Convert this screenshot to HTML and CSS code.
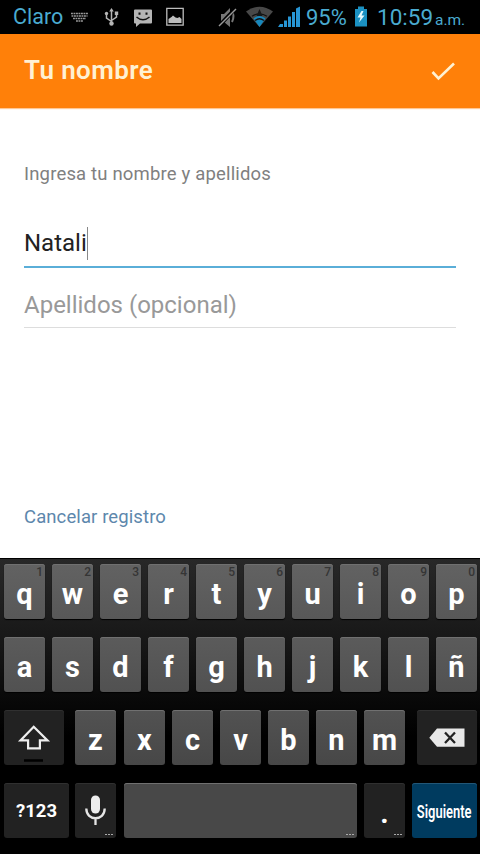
FILE: index.html
```html
<!DOCTYPE html>
<html lang="es">
<head>
<meta charset="utf-8">
<title>Tu nombre</title>
<link rel="stylesheet" href="styles.css">
</head>
<body>
<div class="status">
  <span class="carrier">Claro</span>
  <svg class="icons" width="116" height="33" viewBox="0 0 116 33">
    <path d="M1 13.500h17M1.500 16h16M3 18.500h13M6 21h7" fill="none" stroke="#999" stroke-width="1.700" stroke-dasharray="1.900 .6"/>
    <g fill="none" stroke="#b5b5b5" stroke-width="1.500"><path d="M41.500 10v14M36.500 14v4l5 3.500M46.500 13v4l-5 3.500"/></g>
    <g fill="#b5b5b5"><path d="M41.500 8l2.300 3.500h-4.600zM44.800 11.500h3.400v3.400h-3.400z"/><circle cx="36.500" cy="13.500" r="1.700"/><circle cx="41.500" cy="23.500" r="2.200"/></g>
    <path d="M65 9.500h16q1 0 1 1v12q0 1-1 1H70L66 27v-3.500h-1q-1 0-1-1v-12q0-1 1-1z" fill="#b5b5b5"/>
    <path d="M66.500 17q6.500 5.500 13 0" fill="none" stroke="#111" stroke-width="1.500"/><path d="M68.500 12.500h2v2.200h-2zM75.500 12.500h2v2.200h-2z" fill="#111"/>
    <path d="M96.800 8.300h16.400v16.900H96.800z" fill="none" stroke="#bdbdbd" stroke-width="1.300"/>
    <path d="M98.500 23v-4l3-2 1.500-1.500 2.500 2 2 .5 2-1 2 2v4z" fill="#bdbdbd"/>
  </svg>
  <svg class="signals" width="84" height="33" viewBox="0 0 84 33">
    <path d="M3 14h3l6-6v19l-6-5H3z" fill="#777"/><path d="M14 11q3 5 0 11" fill="none" stroke="#777" stroke-width="2"/>
    <path d="M1 26L17 9" stroke="#000" stroke-width="4"/><path d="M1 26L18 9" stroke="#999" stroke-width="1.500"/>
    <path d="M28 11.500Q41.500 2 55 11.500L41.500 27z" fill="#484848"/>
    <path d="M35.500 18.500q6-5 12 0L41.500 27z" fill="#1688bd"/>
    <path d="M34 16.300q7.500-5 15 0M37 20.500q4.500-3.500 9 0" fill="none" stroke="#101010" stroke-width="1.300"/><path d="M41.500 9l3 7h-6z" fill="#171717"/>
    <path d="M62 24h3v3h-5zM66 20.500h3V27h-3zM70 16.500h3V27h-3zM74 12h3v15h-3zM78 8.500l4-2V27h-4z" fill="#2795d4"/>
  </svg>
  <span class="percent">95%</span>
  <svg class="battery" width="14" height="33" viewBox="0 0 14 33"><path d="M4 6.500h6V9h3v17.500H1V9h3z" fill="#1b91c2"/><path d="M7.500 11L3.500 17.500h3L5 22.500l5.500-7h-3L9.500 11z" fill="#e7fbff"/></svg>
  <span class="clock">10:59</span><span class="ampm">a.m.</span>
</div>
<header class="bar">
  <h1>Tu nombre</h1>
  <svg width="26" height="20" viewBox="0 0 26 20"><path d="M2.500 11l6 6.500L24 2.500" fill="none" stroke="#fff1d3" stroke-width="2.600"/></svg>
</header>
<main class="form">
  <p class="hint">Ingresa tu nombre y apellidos</p>
  <div class="field active"><span class="value">Natali</span><i class="caret"></i></div>
  <div class="field"><span class="placeholder">Apellidos (opcional)</span></div>
  <a class="cancel">Cancelar registro</a>
</main>
<section class="keyboard">
  <div class="row">
    <div class="key">q<sup>1</sup></div><div class="key">w<sup>2</sup></div><div class="key">e<sup>3</sup></div><div class="key">r<sup>4</sup></div><div class="key">t<sup>5</sup></div><div class="key">y<sup>6</sup></div><div class="key">u<sup>7</sup></div><div class="key">i<sup>8</sup></div><div class="key">o<sup>9</sup></div><div class="key">p<sup>0</sup></div>
  </div>
  <div class="row second">
    <div class="key">a</div><div class="key">s</div><div class="key">d</div><div class="key">f</div><div class="key">g</div><div class="key">h</div><div class="key">j</div><div class="key">k</div><div class="key">l</div><div class="key">ñ</div>
  </div>
  <div class="row third">
    <div class="key dark shift"><svg width="60" height="55" viewBox="0 0 60 55"><path d="M29.700 16.700L43.500 30.400H35.900V38.400H24.100V30.400H16.500z" fill="none" stroke="#eee" stroke-width="2.200"/><path d="M20 50.500h19" stroke="#000" stroke-width="2.500"/></svg></div>
    <div class="key">z</div><div class="key">x</div><div class="key">c</div><div class="key">v</div><div class="key">b</div><div class="key">n</div><div class="key">m</div>
    <div class="key dark delete"><svg width="60" height="55" viewBox="0 0 60 55"><path d="M12.300 27.700L20 18.600H47.500V36.700H20z" fill="#e8e8e8"/><path d="M28 22.500l10 10.500M38 22.500l-10 10.500" stroke="#222" stroke-width="2.300"/></svg></div>
  </div>
  <div class="row fourth">
    <div class="key dark symbols">?123</div>
    <div class="key dark mic"><svg width="41" height="55" viewBox="0 0 41 55"><rect x="16" y="12.500" width="9" height="18" rx="4.500" fill="#eee"/><path d="M11.300 25.500c0 13 18.400 13 18.400 0M20.500 35.500V42" fill="none" stroke="#e5e5e5" stroke-width="2.300"/></svg><b class="more"></b></div>
    <div class="key space"><b class="more"></b></div>
    <div class="key dark period"><i class="dot">.</i><b class="more"></b></div>
    <div class="key next"><span>Siguiente</span></div>
  </div>
</section>
</body>
</html>
```
FILE: styles.css
```css
* { box-sizing: border-box; }
body { margin: 0; width: 480px; height: 854px; overflow: hidden; background: #fff; font-family: Roboto, "Liberation Sans", sans-serif; display: flex; flex-direction: column; }
svg { display: block; flex: none; }
.status { height: 34px; flex: none; background: #000; color: #4aabd0; display: flex; line-height: 33px; white-space: nowrap; }
.carrier { width: 57px; margin-left: 13px; font-size: 21.500px; line-height: 33px; }
.signals { margin-left: 32px; }
.percent { width: 45px; margin-left: 4px; font-size: 22px; line-height: 35px; }
.battery { margin-left: 3px; }
.clock { width: 58px; margin-left: 9px; font-size: 22.500px; line-height: 35px; }
.ampm { font-size: 15.500px; line-height: 40px; }
.bar { height: 74px; flex: none; padding: 0 24px; background: #ff8009; display: flex; align-items: center; justify-content: space-between; box-shadow: 0 1px 1px #ffc793; }
.bar h1 { margin: 0; color: #fff1d3; font-size: 26px; font-weight: 600; line-height: 70px; padding-bottom: 2px; letter-spacing: .4px; }
.form { height: 450px; flex: none; padding: 54px 24px 0; display: flex; flex-direction: column; }
.hint { margin: 0; height: 24px; line-height: 24px; font-size: 18.500px; color: #808080; letter-spacing: .17px; }
.field { display: flex; align-items: center; height: 60px; border-bottom: 1px solid #ddd; font-size: 24px; padding-top: 14px; white-space: nowrap; }
.field.active { height: 82px; padding-top: 34px; border-bottom: 2px solid #5aaed8; }
.value { color: #222; }
.placeholder { color: #999; }
.caret { width: 1px; height: 33px; background: #888; }
.cancel { margin-top: 177px; font-size: 18.500px; line-height: 24px; color: #5d87ac; letter-spacing: .1px; }
.keyboard { height: 296px; flex: none; border-top: 1px solid #000; background: linear-gradient(#282828, #161616 30%, #090909 47%, #000 60%); padding: 5px 4px 0; display: flex; flex-direction: column; gap: 18px; }
.row { height: 55px; flex: none; display: flex; gap: 7px; }
.key { position: relative; flex: none; width: 41px; height: 55px; border-radius: 3px; background: linear-gradient(#626262, #585858); box-shadow: inset 0 1px #707070, 0 1px 1px #000; color: #fff; display: flex; align-items: center; justify-content: center; font-size: 29px; font-weight: 700; padding-top: 5px; }
.key sup { position: absolute; top: 2px; right: 2px; font-size: 12px; line-height: 13px; color: #353535; font-weight: 500; }
.second .key { background: linear-gradient(#5b5b5b, #515151); }
.third .key { background: linear-gradient(#525252, #474747); }
.fourth .key { background: #484848; }
.row .dark { background: #222; box-shadow: inset 0 1px #303030; }
.third .shift, .third .delete { width: 60px; padding: 0; }
.shift { margin-right: 4px; }
.third .shift + .key { margin-right: 1px; }
.delete { margin-left: 5px; }
.fourth .symbols { width: 65px; font-size: 18.500px; padding-top: 1px; }
.fourth .mic { padding: 0; margin-left: -1px; }
.fourth .space { width: 233px; margin-left: 1px; }
.more { position: absolute; right: 3px; bottom: 3px; width: 8px; height: 1px; background: repeating-linear-gradient(90deg, #aaa 0 2px, transparent 2px 3px); }
.dot { font-style: normal; }
.fourth .next { width: 65px; background: #003b5f; box-shadow: inset 0 1px #225777; font-size: 19px; font-weight: 600; padding: 1px 0 0; }
.next span { transform: scaleX(.68); }
```
